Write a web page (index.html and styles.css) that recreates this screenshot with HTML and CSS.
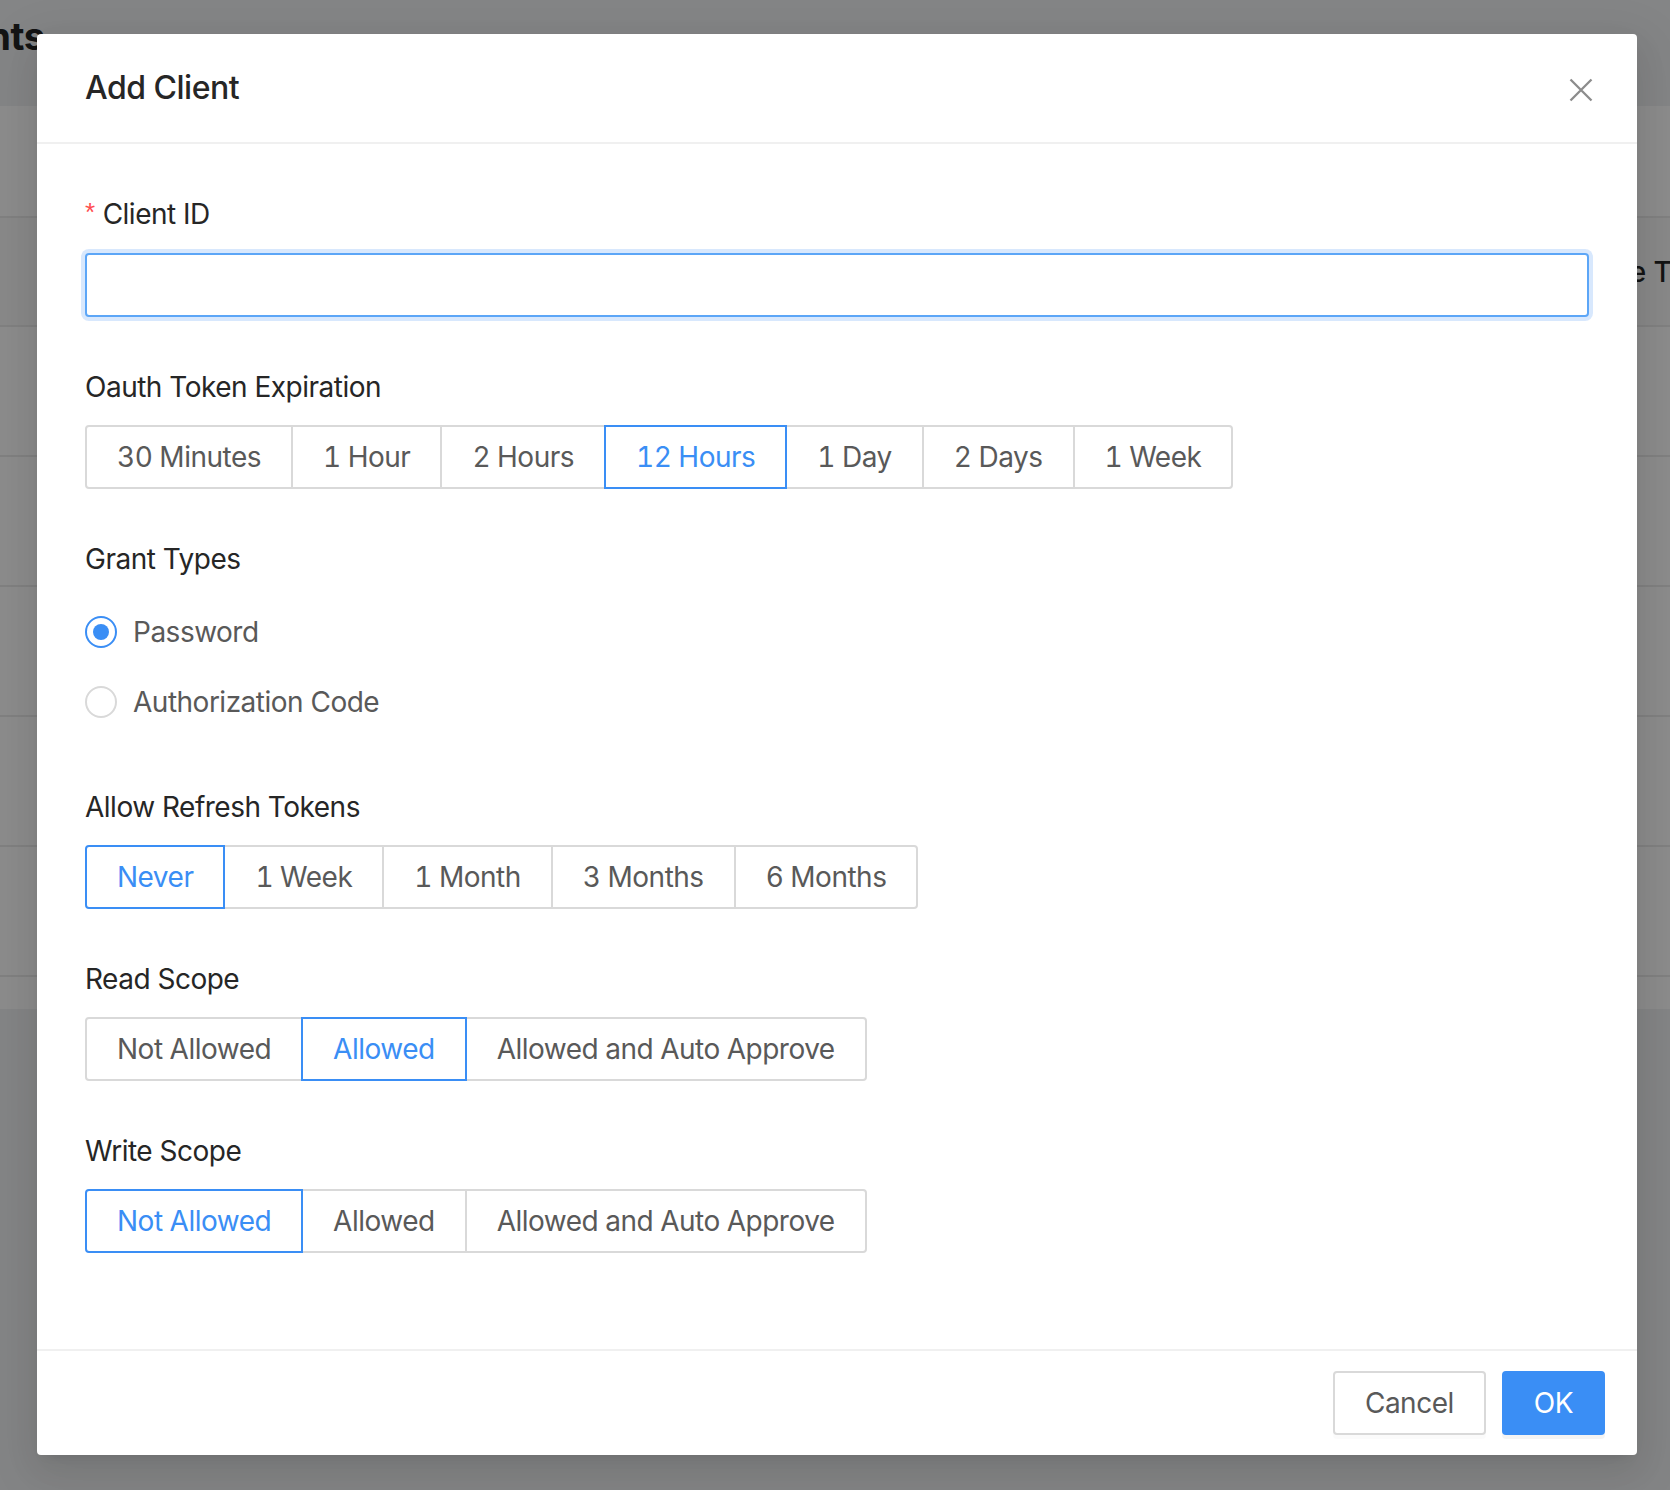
FILE: index.html
```html
<!DOCTYPE html>
<html lang="en">
<head>
<meta charset="utf-8">
<title>Add Client</title>
<link rel="stylesheet" href="styles.css">
</head>
<body>
<div class="page">
  <div class="page-head"><h1 class="page-title">Clients</h1></div>
  <div class="card">
    <div class="card-head"></div>
    <div class="thead">
      <div class="th th-fill">Client ID</div>
      <div class="th th-last">Create Time</div>
    </div>
    <div class="tr"></div>
    <div class="tr"></div>
    <div class="tr"></div>
    <div class="tr"></div>
    <div class="tr"></div>
    <div class="card-foot"></div>
  </div>
</div>

<div class="mask"></div>

<div class="modal" role="dialog" aria-labelledby="modal-title">
  <div class="modal-header">
    <div class="modal-title" id="modal-title">Add Client</div>
  </div>
  <button class="modal-close" aria-label="Close">
    <svg width="24" height="24" viewBox="0 0 24 24" aria-hidden="true">
      <path d="M1.5 1.5 L22.5 22.5 M22.5 1.5 L1.5 22.5" stroke="currentColor" stroke-width="2.3" fill="none" stroke-linecap="butt"/>
    </svg>
  </button>

  <div class="modal-body">
    <div class="form-item">
      <div class="form-label"><span class="req">*</span>Client ID</div>
      <div class="input"></div>
    </div>

    <div class="form-item">
      <div class="form-label">Oauth Token Expiration</div>
      <div class="seg">
        <span class="seg-btn">30 Minutes</span>
        <span class="seg-btn">1 Hour</span>
        <span class="seg-btn">2 Hours</span>
        <span class="seg-btn is-on">12 Hours</span>
        <span class="seg-btn">1 Day</span>
        <span class="seg-btn">2 Days</span>
        <span class="seg-btn">1 Week</span>
      </div>
    </div>

    <div class="form-item">
      <div class="form-label">Grant Types</div>
      <div class="radios">
        <label class="radio is-on"><span class="radio-dot"></span><span class="radio-text">Password</span></label>
        <label class="radio"><span class="radio-dot"></span><span class="radio-text">Authorization Code</span></label>
      </div>
    </div>

    <div class="form-item">
      <div class="form-label">Allow Refresh Tokens</div>
      <div class="seg">
        <span class="seg-btn is-on">Never</span>
        <span class="seg-btn">1 Week</span>
        <span class="seg-btn">1 Month</span>
        <span class="seg-btn">3 Months</span>
        <span class="seg-btn">6 Months</span>
      </div>
    </div>

    <div class="form-item">
      <div class="form-label">Read Scope</div>
      <div class="seg">
        <span class="seg-btn">Not Allowed</span>
        <span class="seg-btn is-on">Allowed</span>
        <span class="seg-btn">Allowed and Auto Approve</span>
      </div>
    </div>

    <div class="form-item">
      <div class="form-label">Write Scope</div>
      <div class="seg">
        <span class="seg-btn is-on">Not Allowed</span>
        <span class="seg-btn">Allowed</span>
        <span class="seg-btn">Allowed and Auto Approve</span>
      </div>
    </div>
  </div>

  <div class="modal-footer">
    <button class="btn">Cancel</button>
    <button class="btn btn-primary">OK</button>
  </div>
</div>
</body>
</html>
```

FILE: styles.css
```css
* { box-sizing: border-box; }

html, body {
  margin: 0;
  padding: 0;
}

body {
  width: 1670px;
  height: 1490px;
  overflow: hidden;
  background: #f0f2f5;
  font-family: "Inter", "Noto Sans", "Liberation Sans", sans-serif;
  letter-spacing: -0.5px;
  position: relative;
}

/* ---------- background page ---------- */
.page {
  display: flex;
  flex-direction: column;
}

.page-head {
  height: 106px;
  padding-top: 8px;
}

.page-title {
  margin: 0 0 0 -82px;
  font-size: 38px;
  line-height: 56px;
  font-weight: 700;
  color: #262626;
  white-space: nowrap;
}

.card {
  background: #ffffff;
  display: flex;
  flex-direction: column;
}

.card-head {
  height: 112px;
  border-bottom: 2px solid #ececec;
}

.thead {
  height: 109px;
  display: flex;
  align-items: center;
  background: #fafafa;
  border-bottom: 2px solid #ececec;
  overflow: hidden;
}

.th {
  font-size: 28px;
  font-weight: 500;
  color: #262626;
  white-space: nowrap;
  letter-spacing: 0;
  min-width: 0;
}

.th-fill {
  flex: 1;
  padding-left: 48px;
}

.th-last {
  flex: 0 0 113px;
}

.tr {
  height: 130px;
  border-bottom: 2px solid #ececec;
}

.card-foot {
  height: 32px;
}

.mask {
  position: absolute;
  inset: 0;
  background: rgba(0, 0, 0, 0.45);
}

/* ---------- modal ---------- */
.modal {
  position: absolute;
  left: 37px;
  top: 34px;
  width: 1600px;
  background: #ffffff;
  border-radius: 4px;
  box-shadow: 0 6px 12px -8px rgba(0, 0, 0, 0.12),
              0 12px 32px 0 rgba(0, 0, 0, 0.08),
              0 18px 56px 16px rgba(0, 0, 0, 0.05);
  color: #262626;
}

.modal-header {
  padding: 32px 48px;
  border-bottom: 2px solid #f0f0f0;
}

.modal-title {
  font-size: 32px;
  line-height: 44px;
  font-weight: 500;
  color: #262626;
}

.modal-close {
  position: absolute;
  top: 0;
  right: 0;
  width: 112px;
  height: 112px;
  padding: 0;
  border: 0;
  background: transparent;
  color: #8c8c8c;
  display: flex;
  align-items: center;
  justify-content: center;
  cursor: pointer;
}

.modal-body {
  padding: 48px 48px 96px;
  display: flex;
  flex-direction: column;
  gap: 48px;
}

.form-item {
  display: flex;
  flex-direction: column;
  align-items: flex-start;
  gap: 16px;
}

.form-label {
  font-size: 28px;
  line-height: 44px;
  color: #262626;
}

.req {
  color: #ff4d4f;
  font-family: "Liberation Sans", sans-serif;
  font-size: 26px;
  margin-right: 8px;
  position: relative;
  top: -3px;
}

.input {
  align-self: stretch;
  height: 64px;
  border: 2px solid #5ca6f7;
  border-radius: 4px;
  box-shadow: 0 0 0 4px rgba(58, 142, 245, 0.2);
  background: #ffffff;
}

/* segmented radio buttons */
.seg {
  display: flex;
}

.seg-btn {
  position: relative;
  height: 64px;
  line-height: 60px;
  padding: 0 30px;
  border: 2px solid #d9d9d9;
  font-size: 28px;
  font-variant-numeric: tabular-nums;
  color: #595959;
  background: #ffffff;
  white-space: nowrap;
}

.seg-btn + .seg-btn {
  margin-left: -2px;
}

.seg-btn:first-child {
  border-radius: 4px 0 0 4px;
}

.seg-btn:last-child {
  border-radius: 0 4px 4px 0;
}

.seg-btn.is-on {
  border-color: #3a8ef5;
  color: #3a8ef5;
  z-index: 1;
}

/* vertical radios */
.radios {
  display: flex;
  flex-direction: column;
}

.radio {
  display: flex;
  align-items: center;
  height: 70px;
}

.radio-dot {
  width: 32px;
  height: 32px;
  border: 2px solid #d9d9d9;
  border-radius: 50%;
  display: flex;
  align-items: center;
  justify-content: center;
  background: #ffffff;
}

.radio.is-on .radio-dot {
  border-color: #3a8ef5;
}

.radio.is-on .radio-dot::after {
  content: "";
  width: 16px;
  height: 16px;
  border-radius: 50%;
  background: #3a8ef5;
}

.radio-text {
  padding-left: 16px;
  font-size: 28px;
  line-height: 44px;
  color: #595959;
}

/* footer */
.modal-footer {
  display: flex;
  justify-content: flex-end;
  gap: 16px;
  padding: 20px 32px;
  border-top: 2px solid #f0f0f0;
}

.btn {
  height: 64px;
  padding: 0 30px;
  border: 2px solid #d9d9d9;
  border-radius: 4px;
  background: #ffffff;
  color: #595959;
  font-family: inherit;
  letter-spacing: inherit;
  font-size: 28px;
  line-height: 60px;
  box-shadow: 0 4px 0 rgba(0, 0, 0, 0.015);
}

.btn-primary {
  background: #3a8ef5;
  border-color: #3a8ef5;
  color: #ffffff;
  box-shadow: 0 4px 0 rgba(0, 0, 0, 0.045);
}
```
